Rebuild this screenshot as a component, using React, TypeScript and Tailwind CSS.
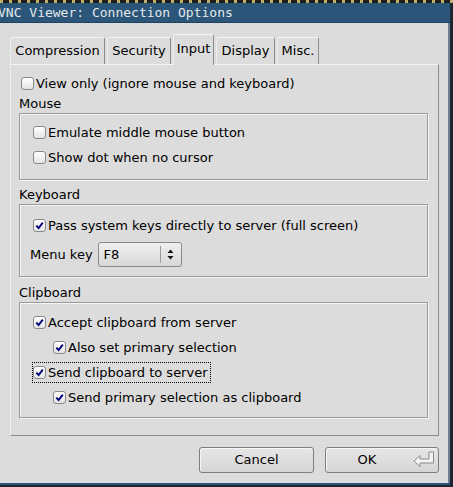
import type { ReactNode } from 'react';

// FLTK-style "Connection Options" dialog, Input tab

const TABS = [
  { label: 'Compression', w: 'w-[95px]' },
  { label: 'Security', w: 'w-[64px]' },
  { label: 'Input', w: 'w-[41px]' },
  { label: 'Display', w: 'w-[59px]' },
  { label: 'Misc.', w: 'w-[42px]' },
];

function Check({ checked }: { checked?: boolean }) {
  return (
    <span className="flex h-[13px] w-[13px] shrink-0 items-center justify-center rounded-[3px] border border-[#8a8a8a] bg-linear-to-b from-white to-[#e4e4e4]">
      {checked ? (
        <svg width="9" height="9" viewBox="0 0 9 9" aria-hidden>
          <path d="M1.3 4.6 L3.6 7 L7.8 1.6" stroke="#00007a" strokeWidth="1.9" fill="none" />
        </svg>
      ) : null}
    </span>
  );
}

function Row({
  checked,
  indent,
  focus,
  children,
}: {
  checked?: boolean;
  indent?: boolean;
  focus?: boolean;
  children: ReactNode;
}) {
  return (
    <div className={`flex h-[25px] items-center ${indent ? 'pl-[33px]' : 'pl-[13px]'}`}>
      <span
        className={`flex items-center gap-[2px] ${
          focus ? '-ml-[1px] border border-dotted border-black pr-[2px] pl-0' : ''
        }`}
      >
        <Check checked={checked} />
        <span>{children}</span>
      </span>
    </div>
  );
}

function Group({ label, mt, h, pt, children }: { label: string; mt: string; h: string; pt: string; children: ReactNode }) {
  return (
    <div className={mt}>
      <div className="mb-[1px] pl-[8px] leading-[16px]">{label}</div>
      <div
        className={`ml-[8px] mr-[10px] ${h} ${pt} border border-[#9a9a9a] shadow-[inset_1px_1px_0_#f6f6f6,1px_1px_0_#f6f6f6]`}
      >
        {children}
      </div>
    </div>
  );
}

export default function App() {
  return (
    <div className="relative h-[487px] w-[453px] overflow-hidden bg-[#1d2630] font-['DejaVu_Sans',sans-serif] text-[13px] text-black">
      {/* desktop showing above the window */}
      <div className="h-[3px] bg-[repeating-linear-gradient(90deg,#bfae6e_0_3px,#1e1e1e_3px_9px)]" />
      {/* title bar */}
      <div className="flex h-[20px] w-[450px] items-center border-b border-[#1f4260] bg-[#2b5679] font-['DejaVu_Sans_Mono',monospace] text-[13px] text-[#e4e8ec]">
        <span className="-ml-[2px] whitespace-pre">VNC Viewer: Connection Options</span>
      </div>
      <div className="flex">
        <div className="h-[460px] w-[448px] bg-[#dcdcdc]">
          {/* tabs */}
          <div className="flex h-[41px] items-end gap-[2px] pl-[10px]">
            {TABS.map((t) => {
              const sel = t.label === 'Input';
              return (
                <div
                  key={t.label}
                  className={`${t.w} flex items-center justify-center rounded-t-[2px] border-t border-l border-r border-t-[#f4f4f4] border-l-[#efefef] border-r-[#8c8c8c] bg-[#dcdcdc] ${
                    sel ? 'relative z-10 -mb-px h-[31px] pb-[3px]' : 'h-[27px]'
                  }`}
                >
                  {t.label}
                </div>
              );
            })}
          </div>
          {/* tab page */}
          <div className="ml-[10px] h-[372px] w-[429px] border-t border-l border-r border-b border-t-[#f4f4f4] border-l-[#efefef] border-r-[#8c8c8c] border-b-[#8c8c8c] pt-[6px]">
            <div className="flex h-[25px] items-center gap-[2px] pl-[10px]">
              <Check />
              <span>View only (ignore mouse and keyboard)</span>
            </div>
            <Group label="Mouse" mt="mt-0" h="h-[67px]" pt="pt-[6px]">
              <Row>Emulate middle mouse button</Row>
              <Row>Show dot when no cursor</Row>
            </Group>
            <Group label="Keyboard" mt="mt-[7px]" h="h-[73px]" pt="pt-[8px]">
              <Row checked>Pass system keys directly to server (full screen)</Row>
              <div className="mt-[4px] flex h-[25px] items-center gap-[5px] pl-[10px]">
                <span>Menu key</span>
                <div className="flex h-[25px] w-[84px] items-center rounded-[3px] border border-[#8a8a8a] bg-linear-to-b from-[#f0f0f0] to-[#d8d8d8]">
                  <span className="flex-1 pl-[5px]">F8</span>
                  <span className="flex h-[17px] w-[21px] items-center justify-center border-l border-[#9a9a9a]">
                    <svg width="7" height="11" viewBox="0 0 7 11" aria-hidden>
                      <path d="M3.5 0.5 L6.5 4 L0.5 4 Z M0.5 7 L6.5 7 L3.5 10.5 Z" fill="#111" />
                    </svg>
                  </span>
                </div>
              </div>
            </Group>
            <Group label="Clipboard" mt="mt-[8px]" h="h-[116px]" pt="pt-[7px]">
              <Row checked>Accept clipboard from server</Row>
              <Row checked indent>
                Also set primary selection
              </Row>
              <Row checked focus>
                Send clipboard to server
              </Row>
              <Row checked indent>
                Send primary selection as clipboard
              </Row>
            </Group>
          </div>
          {/* buttons */}
          <div className="mt-[11px] flex gap-[11px] pl-[199px]">
            <button className="h-[26px] w-[115px] rounded-[3px] border border-[#7e7e7e] bg-linear-to-b from-[#e6e6e6] to-[#d6d6d6] shadow-[inset_1px_1px_0_#f6f6f6]">
              Cancel
            </button>
            <button className="relative flex h-[26px] w-[114px] items-center justify-center rounded-[3px] border border-[#7e7e7e] bg-linear-to-b from-[#e6e6e6] to-[#d6d6d6] pr-[30px] shadow-[inset_1px_1px_0_#f6f6f6]">
              <span>OK</span>
              <svg className="absolute top-[2px] right-[3px]" width="22" height="18" viewBox="0 0 22 18" aria-hidden>
                <path
                  d="M1 11 L7 5.5 L7 9 L16 9 L16 2 L20.5 2 L20.5 13 L7 13 L7 16.5 Z"
                  fill="#f4f4f4"
                  stroke="#8a8a8a"
                  strokeWidth="1"
                />
              </svg>
            </button>
          </div>
        </div>
        <div className="h-[460px] w-[2px] bg-[#6d8094]" />
      </div>
      <div className="h-[2px] w-[450px] bg-[#2b5679]" />
    </div>
  );
}
